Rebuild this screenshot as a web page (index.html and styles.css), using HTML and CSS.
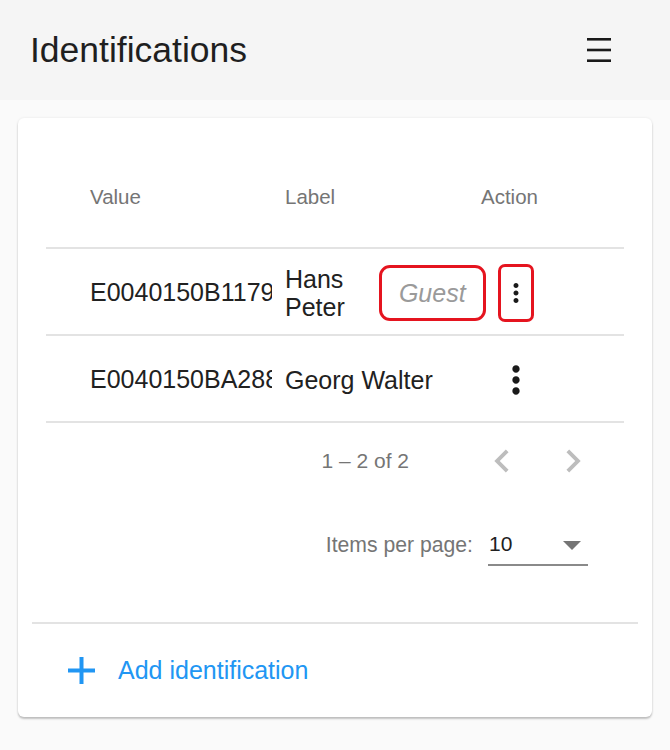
FILE: index.html
```html
<!DOCTYPE html>
<html lang="en">
<head>
<meta charset="utf-8">
<title>Identifications</title>
<link rel="stylesheet" href="styles.css">
</head>
<body>
<header class="toolbar">
  <h1 class="title">Identifications</h1>
  <button class="menu" aria-label="Menu">
    <svg width="24" height="26" viewBox="0 0 24 26"><rect x="0" y="1" width="24" height="2.6" fill="#1a1a1a"/><rect x="0" y="11.7" width="24" height="2.6" fill="#1a1a1a"/><rect x="0" y="22.4" width="24" height="2.6" fill="#1a1a1a"/></svg>
  </button>
</header>
<main class="content">
  <section class="card">
    <div class="table">
      <div class="row head">
        <div class="cell c-value">Value</div>
        <div class="cell c-label">Label</div>
        <div class="cell c-action">Action</div>
      </div>
      <div class="row">
        <div class="cell c-value"><span class="clip">E0040150B1179</span></div>
        <div class="cell c-label"><span class="name">Hans Peter</span><span class="guest">Guest</span></div>
        <div class="cell c-action"><span class="icon-btn"><span class="mark"><svg width="44" height="44" viewBox="0 0 24 24"><path fill="#1a1a1a" d="M12 8c1.1 0 2-.9 2-2s-.9-2-2-2-2 .9-2 2 .9 2 2 2zm0 2c-1.1 0-2 .9-2 2s.9 2 2 2 2-.9 2-2-.9-2-2-2zm0 6c-1.1 0-2 .9-2 2s.9 2 2 2 2-.9 2-2-.9-2-2-2z"/></svg></span></span></div>
      </div>
      <div class="row">
        <div class="cell c-value"><span class="clip">E0040150BA2886</span></div>
        <div class="cell c-label"><span class="name">Georg Walter</span></div>
        <div class="cell c-action"><span class="icon-btn"><svg width="44" height="44" viewBox="0 0 24 24"><path fill="#1a1a1a" d="M12 8c1.1 0 2-.9 2-2s-.9-2-2-2-2 .9-2 2 .9 2 2 2zm0 2c-1.1 0-2 .9-2 2s.9 2 2 2 2-.9 2-2-.9-2-2-2zm0 6c-1.1 0-2 .9-2 2s.9 2 2 2 2-.9 2-2-.9-2-2-2z"/></svg></span></div>
      </div>
    </div>
    <div class="paginator">
      <div class="pg-row range-row">
        <span class="range">1 – 2 of 2</span>
        <span class="nav-btn"><svg width="46" height="46" viewBox="0 0 24 24"><path fill="#bdbdbd" d="M15.41 7.41L14 6l-6 6 6 6 1.41-1.41L10.83 12z"/></svg></span>
        <span class="nav-btn"><svg width="46" height="46" viewBox="0 0 24 24"><path fill="#bdbdbd" d="M10 6L8.59 7.41 13.17 12l-4.58 4.59L10 18l6-6z"/></svg></span>
      </div>
      <div class="pg-row size-row">
        <span class="size-label">Items per page:</span>
        <span class="select"><span class="select-value">10</span><span class="arrow"></span></span>
      </div>
    </div>
    <div class="divider"></div>
    <div class="add">
      <svg class="plus" width="27" height="27" viewBox="0 0 27 27"><rect x="11.5" y="0" width="4" height="27" fill="#2196f3"/><rect x="0" y="11.5" width="27" height="4" fill="#2196f3"/></svg>
      <span class="add-text">Add identification</span>
    </div>
  </section>
</main>
</body>
</html>
```
FILE: styles.css
```css
* { box-sizing: border-box; }

body {
  margin: 0;
  background: #fafafa;
  font-family: "Liberation Sans", Arial, sans-serif;
  color: #212121;
}

.toolbar {
  height: 100px;
  background: #f5f5f5;
  display: flex;
  align-items: center;
  justify-content: space-between;
  padding: 0 59px 0 30px;
}

.title {
  margin: 0;
  font-size: 35.5px;
  font-weight: 400;
  color: #1f1f1f;
}

.menu {
  border: 0;
  background: none;
  padding: 0;
  display: flex;
}

.content {
  padding: 18px;
}

.card {
  background: #fff;
  border-radius: 6px;
  box-shadow: 0 2px 2px rgba(0, 0, 0, 0.22), 0 0 3px rgba(0, 0, 0, 0.08);
  padding: 28px 14px 0;
}

.table {
  margin: 0 14px;
}

.row {
  display: grid;
  grid-template-columns: 239px 196px 1fr;
  height: 87px;
  border-bottom: 2px solid #e3e3e3;
  align-items: center;
}

.row.head {
  height: 103px;
  font-size: 20.5px;
  color: #757575;
}

.row:not(.head) {
  font-size: 25px;
  padding-top: 2px;
}

.c-value {
  padding-left: 44px;
  padding-right: 13px;
  overflow: hidden;
}

.clip {
  display: block;
  white-space: nowrap;
  overflow: hidden;
}

.c-label {
  display: flex;
  align-items: center;
  gap: 34px;
  line-height: 28px;
}

.name {
  flex: 1 1 auto;
}

.guest {
  flex: none;
  width: 107px;
  height: 56px;
  border: 3px solid #e5141f;
  border-radius: 11px;
  display: flex;
  align-items: center;
  justify-content: center;
  font-style: italic;
  color: #9a9a9a;
}

.icon-btn {
  width: 70px;
  height: 70px;
  display: flex;
  align-items: center;
  justify-content: center;
}

.mark {
  width: 36px;
  height: 58px;
  border: 3px solid #e5141f;
  border-radius: 7px;
  display: flex;
  align-items: center;
  justify-content: center;
}

.paginator {
  margin: 0 14px;
  padding-bottom: 31px;
  color: #757575;
  font-size: 21px;
}

.pg-row {
  display: flex;
  justify-content: flex-end;
  align-items: center;
}

.range-row {
  height: 76px;
  padding-right: 15.5px;
}

.range {
  margin-right: 57.5px;
}

.nav-btn {
  width: 71px;
  height: 60px;
  display: flex;
  align-items: center;
  justify-content: center;
}

.size-row {
  height: 92px;
  padding-right: 36px;
}

.size-label {
  margin-right: 15px;
  font-size: 21.2px;
}

.select {
  width: 100px;
  height: 42px;
  border-bottom: 2px solid #8a8a8a;
  display: flex;
  align-items: center;
  justify-content: space-between;
  padding: 0 7px 0 1px;
}

.select-value {
  color: #212121;
}

.arrow {
  width: 0;
  height: 0;
  border-left: 9px solid transparent;
  border-right: 9px solid transparent;
  border-top: 9px solid #757575;
  margin-top: 3px;
}

.divider {
  height: 2px;
  background: #e3e3e3;
}

.add {
  height: 93px;
  display: flex;
  align-items: center;
  padding-left: 36px;
  color: #2196f3;
}

.add-text {
  margin-left: 23px;
  font-size: 25px;
}
```
